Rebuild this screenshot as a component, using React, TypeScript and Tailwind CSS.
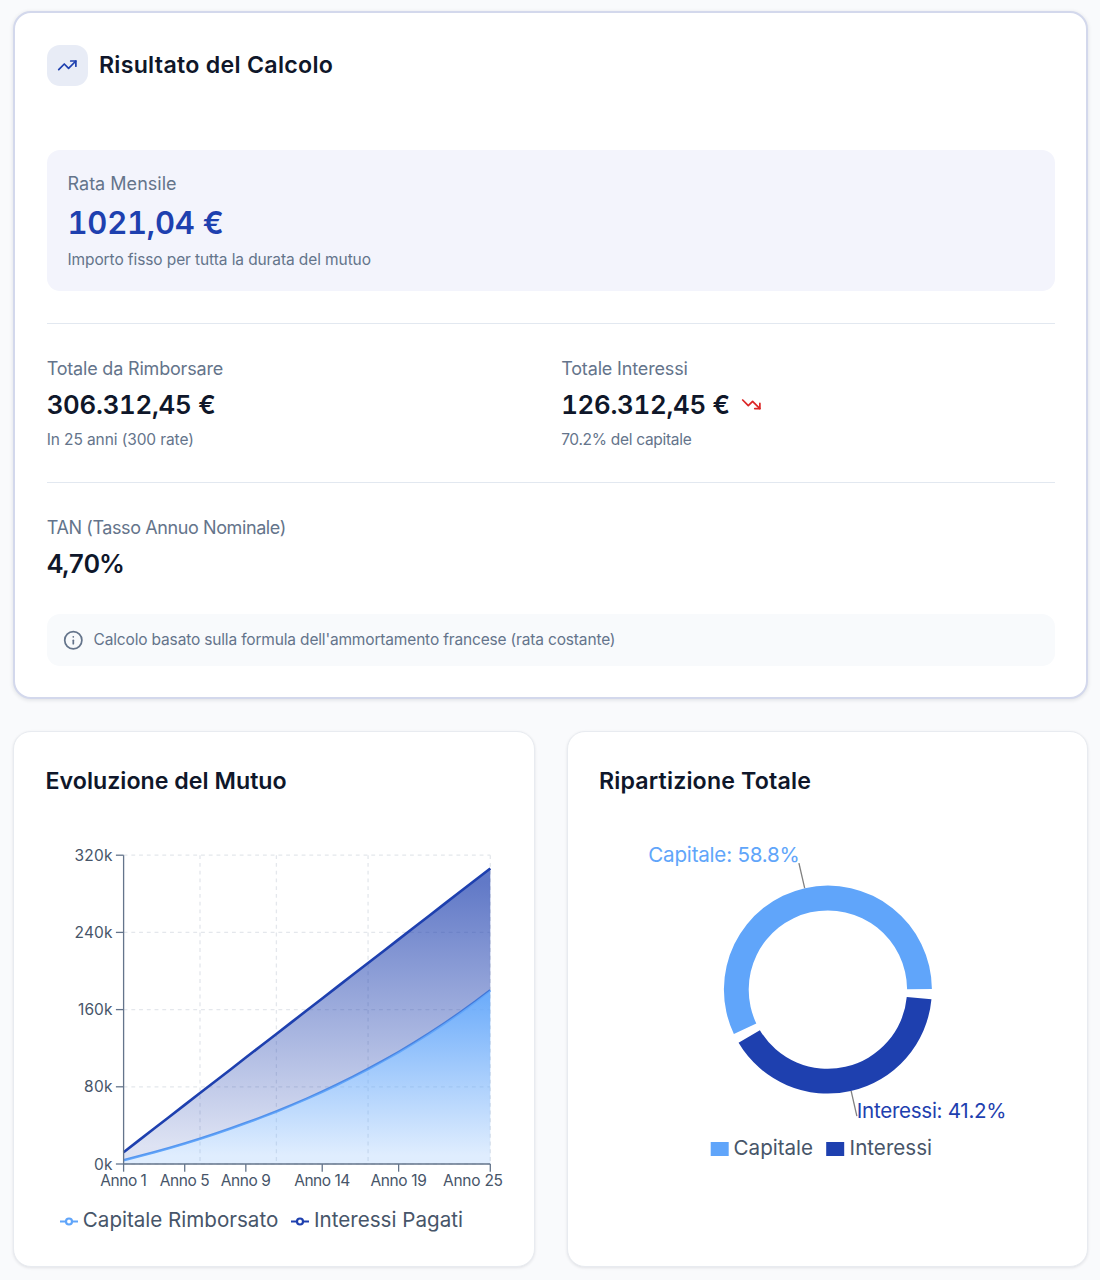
import type { ReactNode } from "react";
import { Info, TrendingDown, TrendingUp } from "lucide-react";

const PRINCIPAL = 180000;
const RATE = 0.047 / 12;
const MONTHS = 300;
const PAYMENT = 1021.04;

// Plot area of the evolution chart, in svg units
const LEFT = 77.6;
const RIGHT = 444.3;
const TOP = 24.2;
const BOTTOM = 333;
const MAX = 320000;

const years = Array.from({ length: 25 }, (_, i) => {
  const n = (i + 1) * 12;
  const repaid =
    (PRINCIPAL * (Math.pow(1 + RATE, n) - 1)) / (Math.pow(1 + RATE, MONTHS) - 1);
  return { year: i + 1, repaid, total: PAYMENT * n };
});

const xOf = (year: number) => LEFT + ((RIGHT - LEFT) * (year - 1)) / 24;
const yOf = (value: number) => BOTTOM - ((BOTTOM - TOP) * value) / MAX;

const repaidLine = years.map((d) => `${xOf(d.year)},${yOf(d.repaid)}`);
const totalLine = years.map((d) => `${xOf(d.year)},${yOf(d.total)}`);

const yTicks = [
  { value: 0, label: "0k", width: 18.5 },
  { value: 80000, label: "80k", width: 28.5 },
  { value: 160000, label: "160k", width: 34.5 },
  { value: 240000, label: "240k", width: 38 },
  { value: 320000, label: "320k", width: 38 },
];

// The last label is pulled left so it stays inside the chart
const xTicks = [
  { year: 1, width: 46.5, shift: 0 },
  { year: 5, width: 50, shift: 0 },
  { year: 9, width: 50, shift: 0 },
  { year: 14, width: 56, shift: 0 },
  { year: 19, width: 56.5, shift: 0 },
  { year: 25, width: 60, shift: -17.3 },
];

const gridYears = [6, 11, 17, 25];

export default function App() {
  return (
    <main className="h-[1280px] w-[1100px] bg-[#f9fafc] pt-[11px] pr-[12px] pl-[13px] font-['Inter',sans-serif] text-[#0f172a]">
      <section className="h-[688px] rounded-[18px] border-2 border-[#d3d8ec] bg-white pt-[32px] pr-[31px] pl-[31.7px] shadow-[0_1px_4px_rgba(15,23,42,0.12)]">
        <div className="flex items-center gap-[10.8px]">
          <div className="flex size-[41.4px] items-center justify-center rounded-[13px] bg-[#e8ecf6]">
            <TrendingUp className="size-[20.6px] text-[#1e40af]" />
          </div>
          <h2 className="pb-[1px] text-[23.2px] leading-[26px] font-semibold tracking-[0.28px]">
            Risultato del Calcolo
          </h2>
        </div>

        <div className="mt-[64px] h-[141px] rounded-[13px] bg-[#f3f4fc] px-[20.8px] pt-[21px]">
          <p className="text-[18px] leading-[26px] tracking-[0.02px] text-[#64748b]">
            Rata Mensile
          </p>
          <p className="mt-[5px] text-[31px] leading-[41px] font-semibold tracking-[-0.22px] text-[#1e40af] tabular-nums">
            1021,04 €
          </p>
          <p className="mt-[6.5px] text-[15.5px] leading-[20.6px] tracking-[-0.1px] text-[#64748b]">
            Importo fisso per tutta la durata del mutuo
          </p>
        </div>

        <div className="mt-[31.5px] h-px bg-[#e2e8f0]" />

        <div className="mt-[32px] grid grid-cols-2 gap-[20.6px]">
          <div>
            <Label className="tracking-[-0.189px]">Totale da Rimborsare</Label>
            <Value className="tracking-[-0.26px]">306.312,45 €</Value>
            <Note className="tracking-[-0.1px]">In 25 anni (300 rate)</Note>
          </div>
          <div>
            <Label className="tracking-[-0.15px]">Totale Interessi</Label>
            <div className="flex items-center gap-[11px]">
              <Value className="tracking-[-0.26px]">126.312,45 €</Value>
              <TrendingDown className="mt-[3px] size-[20.6px] text-[#dc2626]" />
            </div>
            <Note className="tracking-[-0.3px]">70.2% del capitale</Note>
          </div>
        </div>

        <div className="mt-[31.6px] h-px bg-[#e2e8f0]" />

        <div className="mt-[32.2px]">
          <Label className="tracking-[-0.4px]">TAN (Tasso Annuo Nominale)</Label>
          <Value className="tracking-[-1.2px]">4,70%</Value>
        </div>

        <div className="mt-[32.2px] flex h-[52px] items-center gap-[10.3px] rounded-[13px] bg-[#f8fafc] px-[16px] text-[#64748b]">
          <Info className="size-[20.6px]" />
          <p className="text-[15.5px] leading-[20.6px] tracking-[-0.165px]">
            Calcolo basato sulla formula dell'ammortamento francese (rata costante)
          </p>
        </div>
      </section>

      <div className="mt-[32px] grid grid-cols-2 gap-[32px]">
        <ChartCard title={<span className="tracking-[0.02px]">Evoluzione del Mutuo</span>}>
          <EvolutionChart />
        </ChartCard>
        <ChartCard title={<span className="tracking-[0.15px]">Ripartizione Totale</span>}>
          <SplitChart />
        </ChartCard>
      </div>
    </main>
  );
}

function Label({ children, className }: { children: ReactNode; className: string }) {
  return <p className={`text-[18px] leading-[26px] text-[#64748b] ${className}`}>{children}</p>;
}

function Value({ children, className }: { children: ReactNode; className: string }) {
  return (
    <p className={`mt-[5px] text-[25.8px] leading-[36px] font-semibold tabular-nums ${className}`}>
      {children}
    </p>
  );
}

function Note({ children, className }: { children: ReactNode; className: string }) {
  return (
    <p className={`mt-[7px] text-[15.5px] leading-[20.6px] text-[#64748b] ${className}`}>
      {children}
    </p>
  );
}

function ChartCard({ title, children }: { title: ReactNode; children: ReactNode }) {
  return (
    <section className="h-[536px] rounded-[18px] border border-[#e8ebf0] bg-white px-[31.5px] pt-[36px] shadow-[0_1px_3px_rgba(15,23,42,0.1)]">
      <h2 className="text-[23.2px] leading-[26px] font-semibold">{title}</h2>
      {children}
    </section>
  );
}

function EvolutionChart() {
  return (
    <svg width="462" height="420" viewBox="0 0 462 420" className="mt-[37px] overflow-visible">
      <defs>
        <linearGradient id="repaid" x1="0" y1="0" x2="0" y2="1">
          <stop offset="5%" stopColor="#60a5fa" stopOpacity="0.9" />
          <stop offset="95%" stopColor="#60a5fa" stopOpacity="0.2" />
        </linearGradient>
        <linearGradient id="interest" x1="0" y1="0" x2="0" y2="1">
          <stop offset="5%" stopColor="#1e40af" stopOpacity="0.7" />
          <stop offset="95%" stopColor="#1e40af" stopOpacity="0.15" />
        </linearGradient>
      </defs>

      <g stroke="#e4e7ec" strokeWidth="1.3" strokeDasharray="3.87 3.87">
        {yTicks.map((t) => (
          <line key={t.value} x1={LEFT} x2={RIGHT} y1={yOf(t.value)} y2={yOf(t.value)} />
        ))}
        {gridYears.map((year) => (
          <line key={year} x1={xOf(year)} x2={xOf(year)} y1={TOP} y2={BOTTOM} />
        ))}
      </g>

      <polygon
        points={`${repaidLine.join(" ")} ${RIGHT},${BOTTOM} ${LEFT},${BOTTOM}`}
        fill="url(#repaid)"
      />
      <polyline points={repaidLine.join(" ")} fill="none" stroke="#60a5fa" strokeWidth="2.6" />
      <polygon
        points={`${totalLine.join(" ")} ${[...repaidLine].reverse().join(" ")}`}
        fill="url(#interest)"
      />
      <polyline points={totalLine.join(" ")} fill="none" stroke="#1e40af" strokeWidth="2.6" />

      <g stroke="#64748b" strokeWidth="1.3">
        <line x1={LEFT} x2={LEFT} y1={TOP} y2={BOTTOM} />
        <line x1={LEFT} x2={RIGHT} y1={BOTTOM} y2={BOTTOM} />
        {yTicks.map((t) => (
          <line key={t.value} x1={LEFT - 7.7} x2={LEFT} y1={yOf(t.value)} y2={yOf(t.value)} />
        ))}
        {xTicks.map((t) => (
          <line key={t.year} x1={xOf(t.year)} x2={xOf(t.year)} y1={BOTTOM} y2={BOTTOM + 7.7} />
        ))}
      </g>

      <g fill="#475569" fontSize="15.5">
        {yTicks.map((t) => (
          <text key={t.value} x={66.5 - t.width} y={yOf(t.value) + 5.6} textLength={t.width}>
            {t.label}
          </text>
        ))}
        {xTicks.map((t) => (
          <text
            key={t.year}
            x={xOf(t.year) - t.width / 2 + t.shift}
            y={354.8}
            textLength={t.width}
          >
            {`Anno ${t.year}`}
          </text>
        ))}
      </g>

      <LegendLine x={14} color="#60a5fa" />
      <LegendLine x={245} color="#1e40af" />
      <g fill="#475569" fontSize="20.6">
        <text x="36.8" y="396" textLength="195.5">
          Capitale Rimborsato
        </text>
        <text x="268" y="396" textLength="149">
          Interessi Pagati
        </text>
      </g>
    </svg>
  );
}

function LegendLine({ x, color }: { x: number; color: string }) {
  return (
    <g fill="none" stroke={color} strokeWidth="2.2">
      <path d={`M${x} 390.5h6M${x + 12} 390.5h6`} />
      <circle cx={x + 9} cy="390.5" r="3" />
    </g>
  );
}

// Donut centre and radii, in svg units
const CX = 228.9;
const CY = 158.6;
const OUTER = 104;
const INNER = 79.2;

function point(radius: number, degrees: number) {
  const a = (degrees * Math.PI) / 180;
  return `${CX + radius * Math.cos(a)} ${CY - radius * Math.sin(a)}`;
}

function sector(start: number, end: number) {
  const large = end - start > 180 ? 1 : 0;
  return `M${point(OUTER, start)}A${OUTER} ${OUTER} 0 ${large} 0 ${point(OUTER, end)}L${point(INNER, end)}A${INNER} ${INNER} 0 ${large} 1 ${point(INNER, start)}Z`;
}

function SplitChart() {
  return (
    <svg width="458" height="420" viewBox="0 0 458 420" className="mt-[37px] overflow-visible">
      <path d={sector(0.3, 205.3)} fill="#60a5fa" />
      <path d={sector(210.8, 354.7)} fill="#1e40af" />
      <g stroke="#808080" strokeWidth="1.3">
        <path d={`M${point(OUTER, 102.9)}L${point(OUTER + 25.8, 102.9)}`} />
        <path d={`M${point(OUTER, 282.9)}L${point(OUTER + 25.8, 282.9)}`} />
      </g>
      <g fontSize="20.6">
        <text x="49.3" y="31" textLength="151.5" fill="#60a5fa">
          Capitale: 58.8%
        </text>
        <text x="257.8" y="286.5" textLength="149.8" fill="#1e40af">
          Interessi: 41.2%
        </text>
      </g>
      <rect x="111.7" y="311" width="18" height="14" fill="#60a5fa" />
      <rect x="227.2" y="311" width="18" height="14" fill="#1e40af" />
      <g fill="#475569" fontSize="20.6">
        <text x="134.6" y="323.8" textLength="79.5">
          Capitale
        </text>
        <text x="250.6" y="323.8" textLength="82.5">
          Interessi
        </text>
      </g>
    </svg>
  );
}
